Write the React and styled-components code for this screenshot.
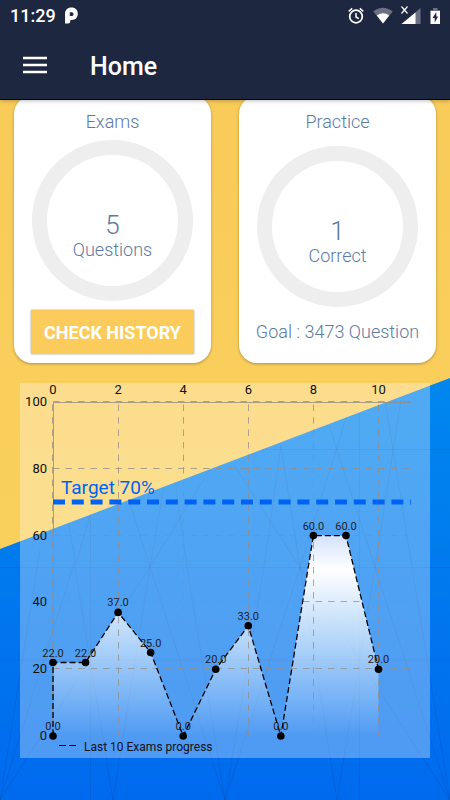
import React from 'react'
import styled, { createGlobalStyle } from 'styled-components'

const GlobalStyle = createGlobalStyle`
* {
  box-sizing: border-box;
}

body {
  margin: 0;
  font-family: Roboto, "Liberation Sans", sans-serif;
  color: #5c7a9f;
}
`

const Page = styled.div`
position: relative;
min-height: 100vh;
overflow: hidden;
background: #0074ee;
`

const Backdrop = styled.svg`
position: absolute;
top: 0;
left: 0;
width: 100%;
height: 100%;
`

const Header = styled.header`
position: relative;
z-index: 2;
margin-bottom: -4px;
background: #1e2740;
border-bottom: 1px solid #05070f;
box-shadow: 0 1px 4px rgba(0, 0, 0, 0.25);
color: #fff;
`

const StatusBar = styled.div`
display: flex;
align-items: center;
gap: 8px;
height: 31px;
padding: 0 8px 0 10px;
font-size: 18px;
font-weight: 500;
`

const StatusIcons = styled.div`
display: flex;
align-items: center;
gap: 8px;
margin-left: auto;
`

const Toolbar = styled.div`
display: flex;
align-items: center;
gap: 41px;
height: 68px;
padding: 0 21px;

h1 {
  margin: 0;
  padding-top: 3px;
  font-size: 25px;
  font-weight: 500;
  line-height: 32px;
}
`

const MenuButton = styled.button`
display: flex;
padding: 0;
border: 0;
background: none;
color: inherit;
cursor: pointer;
`

const Content = styled.main`
position: relative;
`

const Cards = styled.div`
display: grid;
grid-template-columns: repeat(2, minmax(0, 1fr));
gap: 28px;
padding: 0 14px;
`

const Card = styled.section`
display: flex;
flex-direction: column;
align-items: center;
height: 267px;
padding: 14px 17px 9px;
border-radius: 18px;
background: #fff;
box-shadow: 0 1px 3px rgba(0, 0, 0, 0.3);

h2 {
  margin: 0;
  font-size: 18px;
  font-weight: 300;
  line-height: 24px;
}
`

const Ring = styled.div`
display: flex;
flex-direction: column;
align-items: center;
width: 161px;
height: 161px;
margin-top: ${props => props.$gap};
padding-top: 57px;
border: 15px solid #eee;
border-radius: 50%;
font-size: 18px;
font-weight: 300;
line-height: 24px;

strong {
  font-size: 26px;
  font-weight: 300;
  line-height: 26px;
}
`

const HistoryButton = styled.button`
width: 100%;
height: 44px;
margin-top: auto;
padding: 0;
border: 0;
background: #fbcb5b;
box-shadow: 0 0 2px rgba(0, 0, 0, 0.35);
color: #fff;
font-family: inherit;
font-size: 18px;
font-weight: 700;
white-space: nowrap;
cursor: pointer;
`

const Goal = styled.p`
margin: auto 0 10px;
font-size: 18px;
font-weight: 300;
line-height: 24px;
white-space: nowrap;
`

const ChartPanel = styled.section`
margin: 20px 20px 42px;
background: rgba(255, 255, 255, 0.31);
`

const ChartSvg = styled.svg`
display: block;
width: 100%;
height: auto;
font-family: Roboto, "Liberation Sans", sans-serif;
`

const scores = [22, 22, 37, 25, 0, 20, 33, 0, 60, 60, 20]

const xAt = i => 33 + i * 32.55
const yAt = v => 353 - v * 3.34

function Background() {
  return (
    <Backdrop viewBox="0 0 450 800" preserveAspectRatio="none" aria-hidden="true">
      <defs>
        <linearGradient id="sky" x1="0" y1="0" x2="0" y2="1">
          <stop offset="0" stopColor="#0087ee" />
          <stop offset="1" stopColor="#006aee" />
        </linearGradient>
        <linearGradient id="sand" x1="0" y1="0" x2="0" y2="1">
          <stop offset="0" stopColor="#f9ca59" />
          <stop offset="1" stopColor="#f9d05c" />
        </linearGradient>
      </defs>
      <rect y="378" width="450" height="422" fill="url(#sky)" />
      <g stroke="#00408f" strokeOpacity="0.2" fill="none">
        <path d="M225 449.500H450M0 567.500H450M0 660H450M90.500 500V800M359.500 400V800" />
        <path d="M0 800L40 550M0 800L75 560L68 520M0 800L150 567L240 420M113 800L75 567L90 515" />
        <path d="M113 800L150 567L165 480M225 800L150 567L129 500M225 800L187 567L175 480" />
        <path d="M225 800L264 567L281 446M225 800L300 567L347 415M337 800L300 567L281 446" />
        <path d="M337 800L375 567L401 400M450 800L375 567L329 425M450 800L412 567L385 400" />
        <path d="M450 800L337 625L234 465" />
      </g>
      <path d="M0 0H450V378L0 549Z" fill="url(#sand)" />
    </Backdrop>
  )
}

function ScoreChart() {
  const line = scores.map((v, i) => `${xAt(i)} ${yAt(v)}`).join('L')

  return (
    <ChartSvg viewBox="0 0 410 375" role="img" aria-label="Last 10 Exams progress">
      <defs>
        <linearGradient id="fade" gradientUnits="userSpaceOnUse" x1="0" y1="150" x2="0" y2="353">
          <stop offset="0" stopColor="#cfe0fb" />
          <stop offset="0.18" stopColor="#fff" />
          <stop offset="1" stopColor="#fff" stopOpacity="0" />
        </linearGradient>
      </defs>

      <path d={`M${xAt(0)} 353L${line}V353Z`} fill="url(#fade)" />

      <g stroke="#948c88" strokeOpacity="0.75" strokeDasharray="6.500 6" fill="none">
        {[0, 20, 40, 60, 80, 100].map(v => (
          <path key={v} d={`M33 ${Math.round(yAt(v)) - 0.5}H391`} />
        ))}
        {[0, 2, 4, 6, 8, 10].map(i => (
          <path key={i} d={`M${Math.ceil(xAt(i)) - 0.5} 353V19`} />
        ))}
      </g>
      <path d="M33.500 353V19.500H391" fill="none" stroke="#948c88" strokeOpacity="0.8" />

      <path d="M33 119H391" stroke="#0062f5" strokeWidth="5" strokeDasharray="12 6.800" />
      <text x="41" y="111" fontSize="19" fill="#0062f5">Target 70%</text>

      <path
        d={`M${xAt(0)} 353L${line}`}
        fill="none"
        stroke="#000"
        strokeWidth="1.300"
        strokeDasharray="6 3"
      />
      {[[0, 0], ...scores.map((v, i) => [i, v])].map(([i, v], n) => (
        <g key={n}>
          <circle cx={xAt(i)} cy={yAt(v)} r="3.800" />
          <text x={xAt(i)} y={yAt(v) - 6} fontSize="11" textAnchor="middle" fill="#222">{v.toFixed(1)}</text>
        </g>
      ))}

      <g fontSize="13" fill="#111">
        {[0, 2, 4, 6, 8, 10].map(i => (
          <text key={i} x={xAt(i)} y="11" textAnchor="middle">{i}</text>
        ))}
        {[0, 20, 40, 60, 80, 100].map(v => (
          <text key={v} x="27" y={yAt(v) + 4} textAnchor="end">{v}</text>
        ))}
        <text x="64" y="368" fontSize="12">Last 10 Exams progress</text>
      </g>
      <path d="M39 362.500H56" stroke="#000" strokeDasharray="7 3" />
    </ChartSvg>
  )
}

function PhoneStatus() {
  return (
    <StatusBar>
      <span>11:29</span>
      <svg width="16" height="18" viewBox="0 0 16 18" aria-hidden="true">
        <path fill="#fff" fillRule="evenodd" d="M1 16.500V7C1 3 3.500 0.500 7.500 0.500C11.500 0.500 13.800 3.100 13.800 6.800S11.500 13 7.800 13H6.300V14Q6.300 16.500 3.800 16.500ZM5.800 5.300V9H7.700A1.850 1.850 0 0 0 7.700 5.300Z" />
      </svg>
      <StatusIcons>
        <svg width="18" height="18" viewBox="0 0 18 18" fill="none" stroke="#fff" aria-hidden="true">
          <circle cx="9" cy="9.500" r="6.300" strokeWidth="1.700" />
          <path d="M9 6V10L11.800 11.700M1.700 4.300L5.200 1.400M16.300 4.300L12.800 1.400" strokeWidth="1.500" />
        </svg>
        <svg width="20" height="18" viewBox="0 0 20 18" aria-hidden="true">
          <path fill="#6b7183" d="M0.300 4.500Q10 -3 19.700 4.500L10 16.500Z" />
          <path fill="#fff" d="M3.800 8.500Q10 3.800 16.200 8.500L10 16.500Z" />
        </svg>
        <svg width="20" height="20" viewBox="0 0 20 20" aria-hidden="true">
          <path fill="#6b7183" d="M19.500 2V18H0.500Z" />
          <path fill="#fff" d="M14.500 6.500V18H0.500Z" />
          <path stroke="#fff" strokeWidth="1.200" d="M0.500 0.500L6.500 7.500M6.500 0.500L0.500 7.500" />
        </svg>
        <svg width="13" height="18" viewBox="0 0 13 18" aria-hidden="true">
          <path fill="#6b7183" d="M4 1H8.500V3H11V5H1.500V3H4Z" />
          <path fill="#fff" d="M1.500 4H11V17H1.500Z" />
          <path fill="#1e2740" d="M7.300 5L3.500 11H5.700V15.500L9.100 9.500H7.300Z" />
        </svg>
      </StatusIcons>
    </StatusBar>
  )
}

function App() {
  return (
    <Page>
      <GlobalStyle />
      <Background />
      <Header>
        <PhoneStatus />
        <Toolbar>
          <MenuButton type="button" aria-label="Menu">
            <svg width="28" height="20" viewBox="0 0 28 20" aria-hidden="true">
              <path d="M2 3H26M2 10H26M2 17H26" stroke="#fff" strokeWidth="2.600" />
            </svg>
          </MenuButton>
          <h1>Home</h1>
        </Toolbar>
      </Header>
      <Content>
        <Cards>
          <Card>
            <h2>Exams</h2>
            <Ring $gap="6px">
              <strong>5</strong>
              <span>Questions</span>
            </Ring>
            <HistoryButton type="button">CHECK HISTORY</HistoryButton>
          </Card>
          <Card>
            <h2>Practice</h2>
            <Ring $gap="12px">
              <strong>1</strong>
              <span>Correct</span>
            </Ring>
            <Goal>Goal : 3473 Question</Goal>
          </Card>
        </Cards>
        <ChartPanel>
          <ScoreChart />
        </ChartPanel>
      </Content>
    </Page>
  )
}

export default App
